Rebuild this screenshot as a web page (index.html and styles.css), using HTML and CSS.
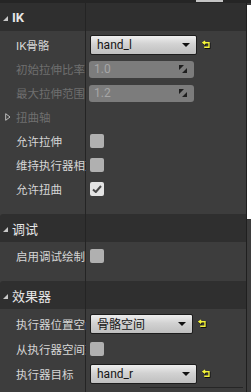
FILE: index.html
```html
<!DOCTYPE html>
<html>
<head>
	<meta charset="UTF-8">
	<title>IK details</title>
	<link rel="stylesheet" href="styles.css">
</head>
<body>

	<div class="topbar"><span class="tab"></span></div>

	<div class="panel">
		<div class="groups">

			<!-- IK -->
			<div class="group-head"><span class="caret"></span>IK</div>
			<div class="group-body">
				<div class="row">
					<div class="label">IK骨骼</div>
					<div class="value">
						<div class="combo"><span>hand_l</span><i class="arrow"></i></div>
						<svg class="reset" width="9" height="9" viewBox="0 0 9 9"><path d="M3.2 1 L1 2.7 L3.2 4.4 M1.5 2.7 H7 V7.2 H2.2" fill="none" stroke="#000" stroke-width="1.6" transform="translate(.6 .8)"/><path d="M3.2 1 L1 2.7 L3.2 4.4 M1.5 2.7 H7 V7.2 H2.2" fill="none" stroke="#f4f43a" stroke-width="1.4"/></svg>
					</div>
				</div>
				<div class="row">
					<div class="label dim">初始拉伸比率</div>
					<div class="value">
						<div class="num"><span>1.0</span><svg width="8" height="8" viewBox="0 0 8 8"><path d="M0 0 H5 L0 5 Z M8 8 H3 L8 3 Z" fill="#1e1e1e"/></svg></div>
					</div>
				</div>
				<div class="row">
					<div class="label dim">最大拉伸范围</div>
					<div class="value">
						<div class="num"><span>1.2</span><svg width="8" height="8" viewBox="0 0 8 8"><path d="M0 0 H5 L0 5 Z M8 8 H3 L8 3 Z" fill="#1e1e1e"/></svg></div>
					</div>
				</div>
				<div class="row">
					<div class="label dim sub"><svg width="6" height="8" viewBox="0 0 6 8"><path d="M.7 .7 L5 4 L.7 7.3 Z" fill="none" stroke="#bdbdbd" stroke-width="1"/></svg>扭曲轴</div>
					<div class="value"></div>
				</div>
				<div class="row">
					<div class="label">允许拉伸</div>
					<div class="value"><span class="check"></span></div>
				</div>
				<div class="row">
					<div class="label">维持执行器相对</div>
					<div class="value"><span class="check"></span></div>
				</div>
				<div class="row">
					<div class="label">允许扭曲</div>
					<div class="value"><span class="check on"><svg width="10" height="8" viewBox="0 0 10 8"><path d="M1 4.5 L3.8 7 L9 1" fill="none" stroke="#4a4a4a" stroke-width="2"/></svg></span></div>
				</div>
			</div>

			<!-- 调试 -->
			<div class="group-head light"><span class="caret"></span>调试</div>
			<div class="group-body">
				<div class="row">
					<div class="label">启用调试绘制</div>
					<div class="value"><span class="check"></span></div>
				</div>
			</div>

			<!-- 效果器 -->
			<div class="group-head light"><span class="caret"></span>效果器</div>
			<div class="group-body tall">
				<div class="row">
					<div class="label">执行器位置空间</div>
					<div class="value">
						<div class="combo short"><span>骨骼空间</span><i class="arrow"></i></div>
						<svg class="reset" width="9" height="9" viewBox="0 0 9 9"><path d="M3.2 1 L1 2.7 L3.2 4.4 M1.5 2.7 H7 V7.2 H2.2" fill="none" stroke="#000" stroke-width="1.6" transform="translate(.6 .8)"/><path d="M3.2 1 L1 2.7 L3.2 4.4 M1.5 2.7 H7 V7.2 H2.2" fill="none" stroke="#f4f43a" stroke-width="1.4"/></svg>
					</div>
				</div>
				<div class="row">
					<div class="label">从执行器空间到</div>
					<div class="value"><span class="check"></span></div>
				</div>
				<div class="row">
					<div class="label">执行器目标</div>
					<div class="value">
						<div class="combo"><span>hand_r</span><i class="arrow"></i></div>
						<svg class="reset" width="9" height="9" viewBox="0 0 9 9"><path d="M3.2 1 L1 2.7 L3.2 4.4 M1.5 2.7 H7 V7.2 H2.2" fill="none" stroke="#000" stroke-width="1.6" transform="translate(.6 .8)"/><path d="M3.2 1 L1 2.7 L3.2 4.4 M1.5 2.7 H7 V7.2 H2.2" fill="none" stroke="#f4f43a" stroke-width="1.4"/></svg>
					</div>
				</div>
				<div class="hscroll"></div>
			</div>

		</div>
		<div class="vscroll"><span class="thumb"></span></div>
	</div>

</body>
</html>
```

FILE: styles.css
```css
html, body {
	margin: 0;
	padding: 0;
	width: 251px;
	height: 392px;
	overflow: hidden;
	background: #3d3d3d;
	font-family: Roboto, "Noto Sans CJK SC", sans-serif;
}

.topbar {
	display: flex;
	height: 3px;
	padding-left: 196px;
	background: #252525;
}
.tab {
	width: 27px;
	height: 2px;
	background: #c4c4c4;
}

.panel {
	display: flex;
}
.groups {
	width: 246px;
	border-right: 1px solid #1f1f1f;
}
.vscroll {
	flex: 1;
	background: #3d3d3d;
}
.thumb {
	display: block;
	height: 214px;
	margin-top: 2px;
	background: #fff;
}

/* vertical split line between names and values */
.group-head, .group-body {
	background-image: linear-gradient(to right, transparent 85px, #242424 85px, #242424 86px, transparent 86px);
}

.group-head {
	display: flex;
	align-items: center;
	height: 28px;
	padding-left: 3px;
	background-color: #2f2f2f;
	color: #e6e6e6;
	font-size: 13px;
	font-weight: bold;
}
.group-head.light {
	font-weight: normal;
	border-top-left-radius: 3px;
}
.caret {
	width: 0;
	height: 0;
	margin-right: 4px;
	margin-top: 2px;
	border-left: 5px solid transparent;
	border-bottom: 5px solid #c8c8c8;
}

.group-body {
	padding: 2px 0 13px;
}

.row {
	display: grid;
	grid-template-columns: 86px 1fr;
	height: 24px;
}
.tall .row {
	height: 25px;
}

.label {
	display: flex;
	align-items: center;
	padding-left: 16px;
	overflow: hidden;
	white-space: nowrap;
	font-size: 11.5px;
	color: #d6d6d6;
}
.label.dim {
	color: #6f6f6f;
}
.label.sub {
	padding-left: 5px;
}
.label.sub svg {
	margin-right: 5px;
}

.value {
	display: flex;
	align-items: center;
	gap: 5px;
	padding-left: 4px;
}

.combo {
	display: flex;
	align-items: center;
	justify-content: space-between;
	box-sizing: border-box;
	width: 107px;
	height: 20px;
	padding: 0 6px 0 6px;
	border: 1px solid #1c1c1c;
	border-radius: 2px;
	background: linear-gradient(#eeeeee, #d2d2d2 45%, #bfbfbf);
	font-size: 12px;
	color: #151515;
}
.combo.short {
	width: 103px;
}
.arrow {
	width: 0;
	height: 0;
	border-left: 4px solid transparent;
	border-right: 4px solid transparent;
	border-top: 4px solid #111;
}

.reset {
	margin-top: -1px;
}

.num {
	display: flex;
	align-items: center;
	justify-content: space-between;
	box-sizing: border-box;
	width: 105px;
	height: 17px;
	margin-left: -1px;
	padding: 0 7px 0 5px;
	border-radius: 3px;
	background: #7c7c7c;
	font-size: 12px;
	color: #a6a6a6;
}

.check {
	display: flex;
	align-items: center;
	justify-content: center;
	width: 14px;
	height: 14px;
	border-radius: 2px;
	background: #b0b0b0;
}
.check.on {
	background: #e4e4e4;
}

.hscroll {
	width: 103px;
	height: 1px;
	margin: 1px 0 0 140px;
	background: #262626;
}
```
